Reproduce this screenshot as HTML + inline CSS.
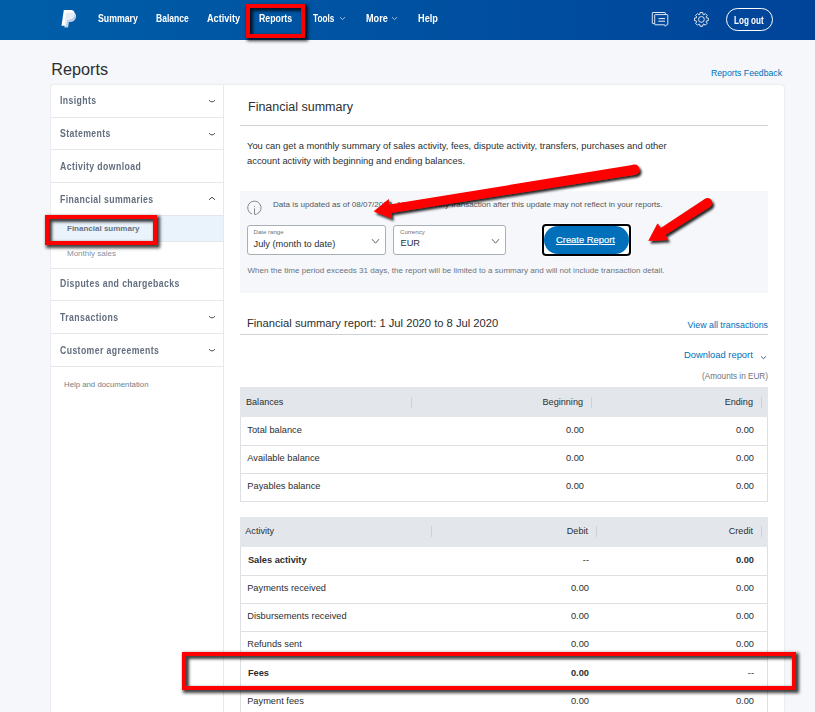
<!DOCTYPE html>
<html><head><meta charset="utf-8">
<style>
*{box-sizing:border-box;margin:0;padding:0}
html,body{width:815px;height:712px;overflow:hidden}
body{background:#f5f7fa;font-family:"Liberation Sans",sans-serif;color:#2c2e2f;position:relative}
.a{position:absolute;white-space:nowrap}
#hdr{position:absolute;left:0;top:0;width:815px;height:40px;background:linear-gradient(90deg,#005ea8,#00449a)}
.nav{position:absolute;top:13.2px;font-size:10px;font-weight:bold;color:#fff;transform-origin:0 0;white-space:nowrap}
.chev{display:inline-block;width:4px;height:4px;border-right:1px solid #c9d6ea;border-bottom:1px solid #c9d6ea;transform:rotate(45deg);margin-left:5px;position:relative;top:-3px}
.rbox{position:absolute;border:4px solid #f00;box-shadow:2px 2px 3px 1px rgba(0,0,0,.75), inset 2px 2px 3px 1px rgba(0,0,0,.75)}
#side{position:absolute;left:51px;top:85px;width:173px;height:640px;border-right:1px solid #e6e8eb}
.sn{font-size:10px;font-weight:bold;color:#636e7e;letter-spacing:0.45px;transform:scaleX(.87);transform-origin:0 0}
.sch{position:absolute;left:156.8px;width:8px;height:5px}
#card{position:absolute;left:51px;top:85px;width:733px;height:640px;background:#fff;border-radius:3px;box-shadow:0 0 2px rgba(0,0,0,.15)}
.th{font-size:9.1px;color:#2c2e2f}
.td{font-size:9.27px;color:#2c2e2f}
.b{font-weight:bold}
</style></head><body>
<div id="hdr">
  <svg class="a" style="left:55px;top:2px" width="30" height="34" viewBox="55 2 30 34">
    <defs><clipPath id="bp"><path d="M63.8,10 h6.6 c3.3,0 4.6,2 4.1,4.6 c-.6,3-2.8,4.9-6,4.9 h-1.6 l-1,6.2 h-4.4 z"/></clipPath></defs>
    <path id="fp" d="M65.8,12.6 h6.6 c3.3,0 4.1,2.4 3.6,4.6 c-.6,3-2.9,4.7-5.8,4.7 h-1.3 l-.8,5.7 h-3.7 z" fill="#bcd0ea"/>
    <path d="M63.8,10 h6.6 c3.3,0 4.6,2 4.1,4.6 c-.6,3-2.8,4.9-6,4.9 h-1.6 l-1,6.2 h-4.4 z" fill="#fff"/>
    <path d="M65.8,12.6 h6.6 c3.3,0 4.1,2.4 3.6,4.6 c-.6,3-2.9,4.7-5.8,4.7 h-1.3 l-.8,5.7 h-3.7 z" fill="#e6edf7" clip-path="url(#bp)"/>
  </svg>
  <svg class="a" style="left:648px;top:8px" width="24" height="24" viewBox="648 8 24 24" fill="none" stroke="#e8eef7" stroke-width="0.95" stroke-linejoin="round">
    <path d="M654.3,23.6 H652.8 Q652.3,23.6 652.3,23.1 V13 Q652.3,12.5 652.8,12.5 H664.8 Q665.3,12.5 665.3,13 V14.6"/>
    <path d="M655.2,14.6 H667.3 Q667.8,14.6 667.8,15.1 V24.3 Q667.8,24.8 667.3,24.8 H666.5 L665.3,26.3 L664.6,24.8 H655.2 Q654.7,24.8 654.7,24.3 V15.1 Q654.7,14.6 655.2,14.6 Z"/>
    <path d="M658.5,18.6 H665 M658.3,21.2 H665" stroke-width="1"/>
  </svg>
  <svg class="a" style="left:690px;top:8px" width="24" height="24" viewBox="690 8 24 24" fill="none" stroke="#e8eef7" stroke-width="0.95" stroke-linejoin="round">
    <path d="M706.47,17.85 L708.27,18.06 L708.27,20.74 L706.47,20.95 L706.08,21.89 L707.20,23.31 L705.31,25.20 L703.89,24.08 L702.95,24.47 L702.74,26.27 L700.06,26.27 L699.85,24.47 L698.91,24.08 L697.49,25.20 L695.60,23.31 L696.72,21.89 L696.33,20.95 L694.53,20.74 L694.53,18.06 L696.33,17.85 L696.72,16.91 L695.60,15.49 L697.49,13.60 L698.91,14.72 L699.85,14.33 L700.06,12.53 L702.74,12.53 L702.95,14.33 L703.89,14.72 L705.31,13.60 L707.20,15.49 L706.08,16.91 Z"/>
    <circle cx="701.4" cy="19.4" r="2.9"/>
  </svg>
  <div class="a" style="left:726px;top:8px;width:47px;height:23px;border:1.3px solid #fff;border-radius:12px"></div>
  <div class="nav" style="left:97.5px;transform:scaleX(0.874)">Summary</div>
  <div class="nav" style="left:156.2px;transform:scaleX(0.853)">Balance</div>
  <div class="nav" style="left:207.3px;transform:scaleX(0.915)">Activity</div>
  <div class="nav" style="left:259.4px;transform:scaleX(0.878)">Reports</div>
  <div class="nav" style="left:312.9px;transform:scaleX(0.823)">Tools</div>
  <div class="nav" style="left:366.2px;transform:scaleX(0.913)">More</div>
  <div class="nav" style="left:418.4px;transform:scaleX(0.918)">Help</div>
  <svg class="a" style="left:338.6px;top:15.6px" width="7" height="5" viewBox="0 0 7 5"><polyline points="1,1.2 3.5,3.6 6,1.2" fill="none" stroke="#b9c9e0" stroke-width="0.9"/></svg>
  <svg class="a" style="left:390.9px;top:15.6px" width="7" height="5" viewBox="0 0 7 5"><polyline points="1,1.2 3.5,3.6 6,1.2" fill="none" stroke="#b9c9e0" stroke-width="0.9"/></svg>
  <div class="nav" style="left:734.4px;top:14.6px;transform:scaleX(0.81)">Log out</div>
</div>
<div class="rbox" style="left:246px;top:4px;width:59px;height:34px"></div>

<div class="a" style="left:51.3px;top:60.1px;font-size:16.2px;color:#2c2e2f">Reports</div>
<div class="a" style="left:711px;top:67.8px;font-size:8.7px;color:#0070ba">Reports Feedback</div>

<div id="card"></div>
<div id="side">
<div class="a" style="left:0;top:32px;width:172px;height:1px;background:#e6e8eb"></div>
<div class="a" style="left:0;top:64px;width:172px;height:1px;background:#e6e8eb"></div>
<div class="a" style="left:0;top:97px;width:172px;height:1px;background:#e6e8eb"></div>
<div class="a" style="left:0;top:183px;width:172px;height:1px;background:#e6e8eb"></div>
<div class="a" style="left:0;top:215px;width:172px;height:1px;background:#e6e8eb"></div>
<div class="a" style="left:0;top:248px;width:172px;height:1px;background:#e6e8eb"></div>
<div class="a" style="left:0;top:281px;width:172px;height:1px;background:#e6e8eb"></div>
<div class="a" style="left:0;top:130px;width:172px;height:27px;background:#eaf3fb;border-top:1px solid #e1e6ec;border-bottom:1px solid #e6e8eb"></div>
<div class="a sn" style="left:8.9px;top:10.0px">Insights</div>
<svg class="sch" style="top:13.5px" viewBox="0 0 8 5"><path d="M1,1.2 Q4,4.6 7,1.2" fill="none" stroke="#33363d" stroke-width="0.9"/></svg>
<div class="a sn" style="left:8.9px;top:43.2px">Statements</div>
<svg class="sch" style="top:46.7px" viewBox="0 0 8 5"><path d="M1,1.2 Q4,4.6 7,1.2" fill="none" stroke="#33363d" stroke-width="0.9"/></svg>
<div class="a sn" style="left:8.9px;top:75.5px">Activity download</div>
<div class="a sn" style="left:8.9px;top:108.6px">Financial summaries</div>
<svg class="sch" style="top:111.4px" viewBox="0 0 8 5"><polyline points="1,3.8 4,1.2 7,3.8" fill="none" stroke="#33363d" stroke-width="0.9"/></svg>
<div class="a sn" style="left:8.9px;top:193.1px">Disputes and chargebacks</div>
<div class="a sn" style="left:8.9px;top:226.5px">Transactions</div>
<svg class="sch" style="top:230.0px" viewBox="0 0 8 5"><path d="M1,1.2 Q4,4.6 7,1.2" fill="none" stroke="#33363d" stroke-width="0.9"/></svg>
<div class="a sn" style="left:8.9px;top:259.7px">Customer agreements</div>
<svg class="sch" style="top:263.2px" viewBox="0 0 8 5"><path d="M1,1.2 Q4,4.6 7,1.2" fill="none" stroke="#33363d" stroke-width="0.9"/></svg>
<div class="a" style="left:16px;top:138.6px;font-size:8px;font-weight:bold;color:#667282">Financial summary</div>
<div class="a" style="left:16px;top:163.8px;font-size:8px;color:#8891a0">Monthly sales</div>
<div class="a" style="left:13px;top:294.9px;font-size:7.8px;color:#757c85">Help and documentation</div>
</div>
<div class="rbox" style="left:45px;top:215px;width:112px;height:30px"></div>


<div class="a" style="left:248px;top:100.2px;font-size:12.5px;color:#2c2e2f">Financial summary</div>
<div class="a" style="left:240px;top:125px;width:528px;height:1px;background:#cfd3d8"></div>
<div class="a" style="left:247px;top:139px;font-size:9.37px;line-height:15px;color:#2c2e2f">You can get a monthly summary of sales activity, fees, dispute activity, transfers, purchases and other<br>account activity with beginning and ending balances.</div>

<div class="a" style="left:240px;top:191px;width:528px;height:102px;background:#f5f7fa"></div>
<svg class="a" style="left:244px;top:198px" width="22" height="20" viewBox="244 198 22 20" fill="none" stroke="#7d848c" stroke-width="0.95">
  <path d="M252.1,214.1 A6.7,6.7 0 1 1 256.7,214.1"/>
  <path d="M254.5,208.3 V214.4 H256.4"/>
  <circle cx="254.5" cy="206.2" r="0.55" fill="#7d848c" stroke="none"/>
</svg>
<div class="a" style="left:273px;top:200px;font-size:8.1px;color:#4f5760">Data is updated as of 08/07/2020, 10:00 AM. Any transaction after this update may not reflect in your reports.</div>

<div class="a" style="left:247px;top:225px;width:139px;height:30px;background:#fff;border:1px solid #a9afb5;border-radius:3px"></div>
<div class="a" style="left:253.5px;top:227.8px;font-size:6.1px;color:#6c737c">Date range</div>
<div class="a" style="left:253.5px;top:238.5px;font-size:9.26px;color:#2c2e2f">July (month to date)</div>
<svg class="a" style="left:370.5px;top:238px" width="9" height="7" viewBox="0 0 9 7"><polyline points="1,1.2 4.5,5.2 8,1.2" fill="none" stroke="#5c636b" stroke-width="1"/></svg>

<div class="a" style="left:393px;top:225px;width:113px;height:30px;background:#fff;border:1px solid #a9afb5;border-radius:3px"></div>
<div class="a" style="left:400px;top:227.8px;font-size:6.1px;color:#6c737c">Currency</div>
<div class="a" style="left:400.5px;top:237.8px;font-size:9.26px;color:#2c2e2f">EUR</div>
<svg class="a" style="left:491px;top:238px" width="9" height="7" viewBox="0 0 9 7"><polyline points="1,1.2 4.5,5.2 8,1.2" fill="none" stroke="#5c636b" stroke-width="1"/></svg>

<div class="a" style="left:542px;top:224px;width:89px;height:32px;border:2px solid #000;border-radius:4px;background:#fff;box-shadow:0 0 0 1px #fff"></div>
<div class="a" style="left:544px;top:226px;width:85px;height:28px;border-radius:14px;background:#0070ba"></div>
<div class="a" style="left:556px;top:234px;font-size:9.4px;color:#fff;text-decoration:underline;-webkit-text-stroke:0.15px #fff">Create Report</div>

<div class="a" style="left:247.4px;top:266px;font-size:8.1px;color:#6c737c">When the time period exceeds 31 days, the report will be limited to a summary and will not include transaction detail.</div>

<div class="a" style="left:247px;top:317px;font-size:11.2px;color:#2c2e2f">Financial summary report: 1 Jul 2020 to 8 Jul 2020</div>
<div class="a" style="right:47px;top:320px;font-size:8.85px;color:#0070ba">View all transactions</div>
<div class="a" style="left:240px;top:334px;width:528px;height:1px;background:#cfd3d8"></div>
<div class="a" style="left:684px;top:349.4px;font-size:9.4px;color:#0070ba">Download report</div>
<svg class="a" style="left:760px;top:354.6px" width="7" height="5" viewBox="0 0 7 5"><polyline points="1,1.3 3.5,3.7 6,1.3" fill="none" stroke="#2f4f73" stroke-width="0.9"/></svg>
<div class="a" style="right:47px;top:371.5px;font-size:8.2px;color:#6c737c">(Amounts in EUR)</div>

<!--TABLES-->
<div class="a" style="left:240px;top:387px;width:528px;height:115px;border:1px solid #dcdfe3;background:#fff"></div>
<div class="a" style="left:240px;top:387px;width:528px;height:30px;background:#e3e7eb"></div>
<div class="a" style="left:411px;top:397px;width:1px;height:11px;background:#cdd2d7"></div>
<div class="a" style="left:591px;top:397px;width:1px;height:11px;background:#cdd2d7"></div>
<div class="a" style="left:761px;top:397px;width:1px;height:11px;background:#cdd2d7"></div>
<div class="a th" style="left:246px;top:396.9px">Balances</div>
<div class="a th r" style="right:232px;top:396.9px">Beginning</div>
<div class="a th r" style="right:62px;top:396.9px">Ending</div>
<div class="a td" style="left:247.3px;top:424.5px">Total balance</div>
<div class="a td r" style="right:231px;top:424.5px">0.00</div>
<div class="a td r" style="right:61px;top:424.5px">0.00</div>
<div class="a" style="left:240px;top:445px;width:528px;height:1px;background:#dcdfe3"></div>
<div class="a td" style="left:247.3px;top:452.9px">Available balance</div>
<div class="a td r" style="right:231px;top:452.9px">0.00</div>
<div class="a td r" style="right:61px;top:452.9px">0.00</div>
<div class="a" style="left:240px;top:473px;width:528px;height:1px;background:#dcdfe3"></div>
<div class="a td" style="left:247.3px;top:480.9px">Payables balance</div>
<div class="a td r" style="right:231px;top:480.9px">0.00</div>
<div class="a td r" style="right:61px;top:480.9px">0.00</div>
<div class="a" style="left:240px;top:517px;width:528px;height:220px;border:1px solid #dcdfe3;background:#fff"></div>
<div class="a" style="left:240px;top:517px;width:528px;height:30px;background:#e3e7eb"></div>
<div class="a" style="left:431px;top:526px;width:1px;height:11px;background:#cdd2d7"></div>
<div class="a" style="left:596px;top:526px;width:1px;height:11px;background:#cdd2d7"></div>
<div class="a" style="left:761px;top:526px;width:1px;height:11px;background:#cdd2d7"></div>
<div class="a th" style="left:245.3px;top:526.1px">Activity</div>
<div class="a th r" style="right:227px;top:526.1px">Debit</div>
<div class="a th r" style="right:62px;top:526.1px">Credit</div>
<div class="a td b" style="left:247.9px;top:554.5px">Sales activity</div>
<div class="a td r" style="right:226px;top:554.5px">--</div>
<div class="a td b r" style="right:61px;top:554.5px">0.00</div>
<div class="a" style="left:240px;top:575px;width:528px;height:1px;background:#dcdfe3"></div>
<div class="a td" style="left:247.2px;top:583.3px">Payments received</div>
<div class="a td r" style="right:226px;top:583.3px">0.00</div>
<div class="a td r" style="right:61px;top:583.3px">0.00</div>
<div class="a" style="left:240px;top:603px;width:528px;height:1px;background:#dcdfe3"></div>
<div class="a td" style="left:247.2px;top:611.3px">Disbursements received</div>
<div class="a td r" style="right:226px;top:611.3px">0.00</div>
<div class="a td r" style="right:61px;top:611.3px">0.00</div>
<div class="a" style="left:240px;top:631px;width:528px;height:1px;background:#dcdfe3"></div>
<div class="a td" style="left:247.2px;top:639.4px">Refunds sent</div>
<div class="a td r" style="right:226px;top:639.4px">0.00</div>
<div class="a td r" style="right:61px;top:639.4px">0.00</div>
<div class="a" style="left:240px;top:659px;width:528px;height:1px;background:#dcdfe3"></div>
<div class="a td b" style="left:247.9px;top:667.7px">Fees</div>
<div class="a td b r" style="right:226px;top:667.7px">0.00</div>
<div class="a td r" style="right:61px;top:667.7px">--</div>
<div class="a" style="left:240px;top:688px;width:528px;height:1px;background:#dcdfe3"></div>
<div class="a td" style="left:247.2px;top:696.0px">Payment fees</div>
<div class="a td r" style="right:226px;top:696.0px">0.00</div>
<div class="a td r" style="right:61px;top:696.0px">0.00</div>
<div class="rbox" style="left:182px;top:652px;width:614px;height:38px"></div>
<!--/TABLES-->
<!--ARROWS--><svg class="a" style="left:0;top:0" width="815" height="712" viewBox="0 0 815 712">
<defs><filter id="sh" x="-10%" y="-10%" width="120%" height="130%"><feDropShadow dx="2" dy="2.5" stdDeviation="1.3" flood-color="#000" flood-opacity="0.85"/></filter></defs>
<g filter="url(#sh)"><circle cx="634.50" cy="169.70" r="5.10" fill="#f00"/><polygon points="633.70,164.66 387.86,204.86 389.18,213.16 635.30,174.74" fill="#f00"/><polygon points="374.20,211.30 388.53,199.59 391.47,217.96" fill="#f00" stroke="#f00" stroke-width="0.8" stroke-linejoin="round"/></g><g filter="url(#sh)"><circle cx="707.60" cy="202.80" r="4.70" fill="#f00"/><polygon points="705.06,198.85 659.17,229.00 663.66,235.98 710.14,206.75" fill="#f00"/><polygon points="648.80,240.60 657.65,223.85 667.71,239.50" fill="#f00" stroke="#f00" stroke-width="0.8" stroke-linejoin="round"/></g></svg><!--/ARROWS-->
</body></html>
